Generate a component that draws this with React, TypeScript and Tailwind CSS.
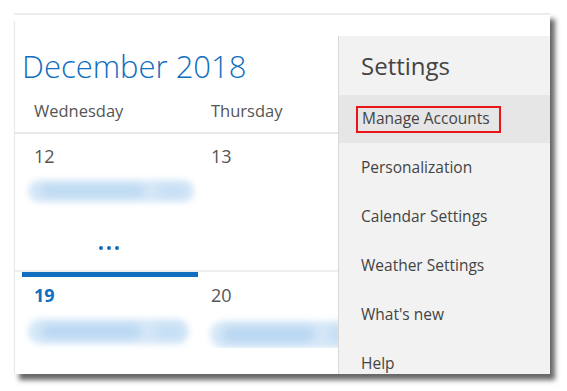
import React from "react";

const font = { fontFamily: '"Open Sans", "Noto Sans", sans-serif' };

function Blur({ w, className = "" }: { w: number; className?: string }) {
  return (
    <div className={`relative shrink-0 h-[22px] ${className}`} style={{ width: w }}>
      <div className="absolute inset-0 rounded-full bg-[#d6e8f8] blur-[3px]" />
      <div className="absolute left-[8%] right-[30%] top-[6px] bottom-[6px] rounded-full bg-[#b9d7f2] blur-[4px]" />
      <div className="absolute left-[78%] right-[4%] top-[6px] bottom-[6px] rounded-full bg-[#c5def4] blur-[4px]" />
    </div>
  );
}

export default function App() {
  const items = ["Personalization", "Calendar Settings", "Weather Settings", "What's new", "Help"];
  return (
    <div className="w-[567px] h-[391px] bg-white overflow-hidden" style={font}>
      <div className="ml-[14px] mt-[13px] w-[536px] h-[361px] bg-white flex border-t-2 border-[#ececec] shadow-[5px_6px_5px_rgba(0,0,0,0.6)]">
        {/* Calendar */}
        <div className="w-[324px] shrink-0 flex flex-col border-l border-[#e8e8e8] mt-[6px] overflow-hidden">
          <div className="shrink-0 pl-[7px] pt-[25px] h-[70px] text-[31px] leading-[40px] font-light text-[#106ebe]">
            December 2018
          </div>
          <div className="shrink-0 flex h-[43px] items-center border-b-2 border-[#e8e8e8] pl-[7px]">
            <div className="w-[176px] shrink-0 pl-[12px] text-[16.5px] text-[#555]">Wednesday</div>
            <div className="w-[140px] shrink-0 pl-[13px] text-[16.5px] text-[#555]">Thursday</div>
          </div>
          <div className="shrink-0 flex h-[138px] border-b-2 border-[#eeeeee] pl-[7px]">
            <div className="w-[176px] shrink-0 flex flex-col">
              <div className="pl-[12px] pt-[10px] text-[18px] leading-[24px] text-[#555]">12</div>
              <Blur w={166} className="ml-[6px] mt-[12px]" />
              <div className="flex justify-center gap-[4px] mt-[44px] pr-[2px]">
                <span className="w-[4px] h-[4px] rounded-full bg-[#106ebe]" />
                <span className="w-[4px] h-[4px] rounded-full bg-[#106ebe]" />
                <span className="w-[4px] h-[4px] rounded-full bg-[#106ebe]" />
              </div>
            </div>
            <div className="w-[140px] shrink-0">
              <div className="pl-[13px] pt-[10px] text-[18px] leading-[24px] text-[#555]">13</div>
            </div>
          </div>
          <div className="shrink-0 flex pl-[7px]">
            <div className="w-[176px] shrink-0 flex flex-col">
              <div className="h-[5px] bg-[#106ebe]" />
              <div className="pl-[12px] pt-[6px] text-[18px] leading-[24px] font-bold text-[#106ebe]">19</div>
              <Blur w={161} className="ml-[6px] mt-[12px] h-[25px]" />
            </div>
            <div className="w-[140px] shrink-0 flex flex-col overflow-hidden">
              <div className="h-[5px]" />
              <div className="pl-[13px] pt-[6px] text-[18px] leading-[24px] text-[#555]">20</div>
              <Blur w={150} className="ml-[12px] mt-[14px] h-[27px]" />
            </div>
          </div>
        </div>
        {/* Settings */}
        <div className="w-[212px] shrink-0 mt-[21px] bg-[#f2f2f2] border-l border-[#d9d9d9] flex flex-col overflow-hidden">
          <div className="shrink-0 pl-[22px] pt-[14px] h-[59px] text-[24px] leading-[32px] text-[#444]">Settings</div>
          <div className="shrink-0 h-[48px] bg-[#e6e6e6] flex items-center pl-[17px]">
            <div className="border-2 border-[#e8161b] h-[27px] w-[145px] pl-[4px] flex items-center text-[15.5px] text-[#444]">
              Manage Accounts
            </div>
          </div>
          {items.map((t) => (
            <div key={t} className="shrink-0 h-[49px] flex items-center pl-[22px] text-[15.5px] text-[#444]">
              {t}
            </div>
          ))}
        </div>
      </div>
    </div>
  );
}
